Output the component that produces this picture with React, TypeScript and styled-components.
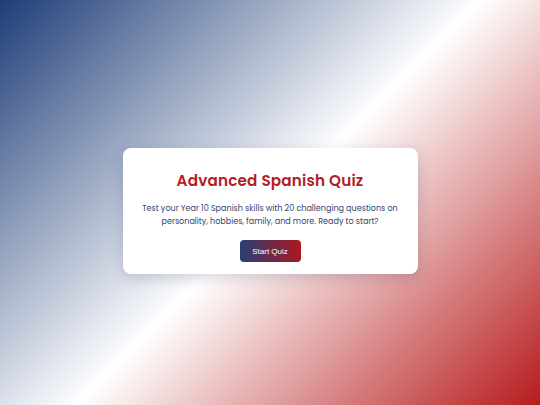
import React from 'react';
import styled, { createGlobalStyle } from 'styled-components';

const GlobalStyle = createGlobalStyle`
  html, body {
    margin: 0;
    padding: 0;
  }

  body {
    font-family: 'Poppins', 'Open Sans', 'Noto Sans', sans-serif;
  }
`;

const Page = styled.main`
  min-height: 100vh;
  display: flex;
  align-items: center;
  justify-content: center;
  background: linear-gradient(135deg, #1f3d78 0%, #ffffff 51%, #b71b1d 100%);
`;

const Card = styled.section`
  width: 295px;
  box-sizing: border-box;
  padding: 23px 12px 12px;
  margin-top: 17px;
  background: #ffffff;
  border-radius: 8px;
  box-shadow: 0 4px 14px rgba(30, 45, 80, 0.18);
  display: flex;
  flex-direction: column;
  align-items: center;
  text-align: center;
`;

const Title = styled.h1`
  margin: 0;
  font-size: 15.2px;
  line-height: 20px;
  font-weight: 600;
  color: #b51c1e;
  letter-spacing: 0.2px;
`;

const Intro = styled.p`
  margin: 10.5px 0 0;
  font-size: 8.05px;
  line-height: 13px;
  color: #34466f;
`;

const StartButton = styled.button`
  margin-top: 12.5px;
  width: 61px;
  height: 22px;
  border: none;
  border-radius: 4px;
  background: linear-gradient(90deg, #283f73, #ab1820);
  color: #ffffff;
  font-family: 'Liberation Sans', Arial, sans-serif;
  font-size: 8px;
  cursor: pointer;
`;

export default function App() {
  return (
    <>
      <GlobalStyle />
      <Page>
        <Card>
          <Title>Advanced Spanish Quiz</Title>
          <Intro>
            Test your Year 10 Spanish skills with 20 challenging questions on
            personality, hobbies, family, and more. Ready to start?
          </Intro>
          <StartButton>Start Quiz</StartButton>
        </Card>
      </Page>
    </>
  );
}
